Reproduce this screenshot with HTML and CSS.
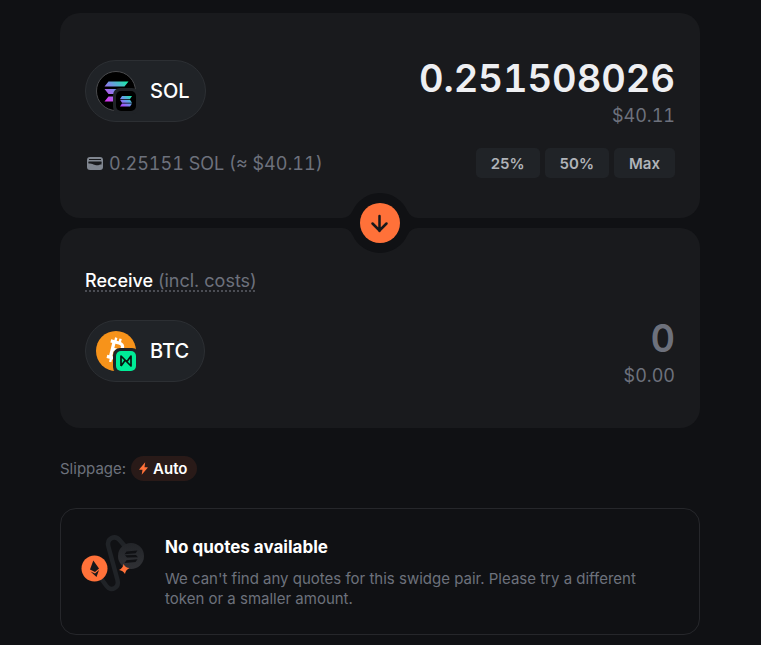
FILE: index.html
```html
<!DOCTYPE html>
<html lang="en">
<head>
<meta charset="utf-8">
<meta name="viewport" content="width=device-width, initial-scale=1">
<title>Swap</title>
<link rel="stylesheet" href="styles.css">
</head>
<body>
<main class="swap">
  <section class="card" aria-label="Send">
    <div class="row">
      <button class="token" type="button">
        <svg class="token-icon" viewBox="0 0 40 40" aria-hidden="true">
          <defs>
            <linearGradient id="sol" gradientUnits="userSpaceOnUse" x1="9" y1="30" x2="30" y2="9">
              <stop offset="0" stop-color="#e02ff0"/><stop offset=".5" stop-color="#7a8ce6"/><stop offset="1" stop-color="#14efa5"/>
            </linearGradient>
            <linearGradient id="sol-small" gradientUnits="userSpaceOnUse" x1="25" y1="36" x2="35" y2="24">
              <stop offset="0" stop-color="#b63bff"/><stop offset=".5" stop-color="#6c95ee"/><stop offset="1" stop-color="#14f1a0"/>
            </linearGradient>
          </defs>
          <circle cx="20" cy="20" r="19.5" fill="#000" stroke="#4a4b4e"/>
          <path fill="url(#sol)" d="M12.500 10.500h20l-4 5H8.500zM8.500 18h20l4 5H12.500zM12.500 25.500h20l-4 5H8.500z"/>
          <rect x="17" y="17" width="26" height="26" rx="7" fill="#202327"/>
          <rect x="20" y="20" width="20" height="20" rx="5" fill="#000"/>
          <path fill="url(#sol-small)" d="M26 25h10l-2 3H24zM24 28.700h10l2 3H26zM26 32.500h10l-2 3H24z"/>
        </svg>
        <span>SOL</span>
      </button>
      <div class="amount">
        <input class="amount-input" type="text" inputmode="decimal" value="0.251508026" aria-label="Amount to send">
        <span class="fiat">$40.11</span>
      </div>
    </div>
    <div class="balance-row">
      <div class="balance">
        <svg class="wallet" viewBox="0 0 16 14" aria-hidden="true">
          <rect width="16" height="13" rx="3" fill="#808690"/>
          <path d="M2 2.500h12M1.500 5h13" stroke="#191a1d" stroke-width="1"/>
          <path d="M1.500 5h13v2.500c-2 0-3 .8-4.500.8C7.500 8.300 6 6.500 1.500 6.500z" fill="#191a1d"/>
        </svg>
        <span>0.25151 SOL (≈ $40.11)</span>
      </div>
      <div class="presets">
        <button type="button">25%</button>
        <button type="button">50%</button>
        <button type="button">Max</button>
      </div>
    </div>
  </section>

  <div class="divider">
    <div class="switcher">
      <svg class="notch" viewBox="0 0 76 60" aria-hidden="true">
        <path fill="#101114" d="M0 25Q7 25 10.500 18A30 30 0 0 1 65.500 18Q69 25 76 25V35Q69 35 65.500 42A30 30 0 0 1 10.500 42Q7 35 0 35z"/>
      </svg>
      <button class="switch" type="button" aria-label="Switch tokens">
        <svg viewBox="0 0 40 40" aria-hidden="true"><path d="M19.500 13v15M12.500 20.500l7 7 7-7" fill="none" stroke="#17181b" stroke-width="2.500" stroke-linecap="round" stroke-linejoin="round"/></svg>
      </button>
    </div>
  </div>

  <section class="card card-receive" aria-label="Receive">
    <h2 class="receive"><span class="hint">Receive <span class="muted">(incl. costs)</span></span></h2>
    <div class="row">
      <button class="token" type="button">
        <svg class="token-icon" viewBox="0 0 40 40" aria-hidden="true">
          <circle cx="20" cy="20" r="20" fill="#f7931a"/>
          <g fill="none" stroke="#fff" transform="rotate(14 20 20)">
            <path d="M12.500 11.500h8.500c6 0 6 7.500 0 7.500h-5M16 19h6c7 0 7 8.500 0 8.500H12.500M16 11.500v16" stroke-width="3.300"/>
            <path d="M17 7v5M21.500 7v5M17 27v5M21.500 27v5" stroke-width="2.400"/>
          </g>
          <rect x="17" y="17" width="26" height="26" rx="7" fill="#202327"/>
          <rect x="20" y="20" width="20" height="20" rx="5" fill="#00ec97"/>
          <path d="M25 35V25l10 10V25l-4 5.500M25 35l4-5.500" fill="none" stroke="#08150f" stroke-width="1.700" stroke-linejoin="round"/>
        </svg>
        <span>BTC</span>
      </button>
      <div class="amount">
        <input class="amount-input" type="text" placeholder="0" readonly aria-label="Amount to receive">
        <span class="fiat">$0.00</span>
      </div>
    </div>
  </section>

  <div class="slippage">
    <span>Slippage:</span>
    <button class="auto" type="button">
      <svg class="bolt" viewBox="0 0 9 13" aria-hidden="true"><path fill="#ff7139" d="M6.200 0.300L0.300 7.200q-.3.600.4.600h2.800L2.700 12.700 8.700 5.800q.3-.6-.4-.6H5.500z"/></svg>
      <span>Auto</span>
    </button>
  </div>

  <section class="notice">
    <svg class="route" viewBox="0 0 64 60" aria-hidden="true">
      <defs>
        <linearGradient id="coin" x1="0" y1="0" x2="0" y2="1"><stop offset="0" stop-color="#232529"/><stop offset="1" stop-color="#303135"/></linearGradient>
      </defs>
      <path d="M48 18L39 7.500C34 1.500 25 5 27.500 14L36.500 47C38.500 55 30 59 25.500 53L14 37" fill="none" stroke="#202327" stroke-width="4.500"/>
      <circle cx="50" cy="23" r="13" fill="url(#coin)"/>
      <path d="M45.500 18.500l11-1-2 2.800-11 1zM44 22.300l11-.3 2 2.300-11 .3zM45.500 27.300l11-1-2 2.800-11 1z" fill="#101114"/>
      <circle cx="13.500" cy="35.500" r="13" fill="#ff7139"/>
      <path d="M12.300 27.500l5.700 8-4 3.500-5-2.500zM9.500 38.500l4.500 2 4-3.500-2.500 7z" fill="#17181b"/>
      <path d="M42.500 31q2 4 6 4-4 2-4.500 6-2-3.500-6-4 4-2 4.500-6z" fill="#ff7139"/>
    </svg>
    <div>
      <h2 class="notice-title">No quotes available</h2>
      <p class="notice-text">We can't find any quotes for this swidge pair. Please try a different token or a smaller amount.</p>
    </div>
  </section>
</main>
</body>
</html>
```
FILE: styles.css
```css
* { box-sizing: border-box; }
body {
  margin: 0;
  padding-right: 1px;
  background: #101114;
  color: #fff;
  font-family: Inter, "Liberation Sans", sans-serif;
}
button, input { font: inherit; color: inherit; }
button { cursor: pointer; border: 0; }
h2, p { margin: 0; }
svg { display: block; }

.swap {
  max-width: 640px;
  margin: 0 auto;
  padding: 13px 0 10px;
}
.card {
  padding: 40px 25px;
  border-radius: 20px;
  background: #191a1d;
}
.card-receive { padding-bottom: 39px; }
.row {
  display: flex;
  align-items: center;
  justify-content: space-between;
  gap: 24px;
}
.token {
  display: flex;
  flex: none;
  align-items: center;
  gap: 14px;
  height: 62px;
  padding: 0 15px 0 10px;
  border: 1px solid #2c2f33;
  border-radius: 31px;
  background: #202327;
  font-size: 20px;
  font-weight: 500;
}
.token-icon { width: 40px; height: 40px; overflow: visible; }
.amount {
  display: flex;
  flex: 1;
  flex-direction: column;
  align-items: flex-end;
  min-width: 0;
}
.amount-input {
  width: 100%;
  height: 50px;
  padding: 0;
  border: 0;
  outline: 0;
  background: none;
  color: #eeeff2;
  font-size: 38px;
  font-weight: 600;
  font-variant-numeric: tabular-nums;
  text-align: right;
}
.amount-input::placeholder { color: #6d717c; opacity: 1; }
.fiat, .balance {
  color: #6d717c;
  font-size: 18px;
  line-height: 26px;
  font-variant-numeric: tabular-nums;
}
.balance-row {
  display: flex;
  align-items: center;
  justify-content: space-between;
  margin-top: 19px;
}
.balance { display: flex; align-items: center; gap: 6px; padding: 2px 0 0 2px; }
.wallet { width: 16px; height: 14px; }
.presets { display: flex; gap: 5px; }
.presets button {
  height: 30px;
  padding: 0 15px;
  border-radius: 5px;
  background: #202327;
  color: #b0b3b8;
  font-size: 15px;
  font-weight: 600;
}

.divider { position: relative; height: 10px; }
.switcher {
  position: absolute;
  inset: -25px 0;
  display: grid;
  place-items: center;
}
.notch, .switch { grid-area: 1 / 1; }
.notch { width: 76px; height: 60px; }
.switch {
  width: 40px;
  height: 40px;
  padding: 0;
  border-radius: 50%;
  background: #ff7139;
}

.receive {
  margin-bottom: 19px;
  font-size: 18px;
  line-height: 26px;
  font-weight: 500;
}
.hint {
  text-decoration: underline dotted 2px #4b4d54;
  text-decoration-skip-ink: none;
  text-underline-offset: 3px;
}
.muted { color: #6d717c; font-weight: 400; }

.slippage {
  display: flex;
  align-items: center;
  gap: 5px;
  margin-top: 28px;
  color: #6d717c;
  font-size: 15px;
}
.auto {
  display: flex;
  align-items: center;
  gap: 5px;
  height: 25px;
  padding: 0 10px 0 8px;
  border-radius: 13px;
  background: #291a18;
  color: #fff;
  font-weight: 600;
}
.bolt { width: 9px; height: 13px; }

.notice {
  display: flex;
  align-items: flex-start;
  gap: 20px;
  margin-top: 27px;
  padding: 24px 24px 25px 20px;
  border: 1px solid #26272b;
  border-radius: 16px;
}
.route { flex: none; width: 64px; height: 60px; }
.notice-title { font-size: 17px; line-height: 28px; font-weight: 700; }
.notice-text {
  margin-top: 8px;
  color: #6d717c;
  font-size: 15px;
  line-height: 20px;
}
```
